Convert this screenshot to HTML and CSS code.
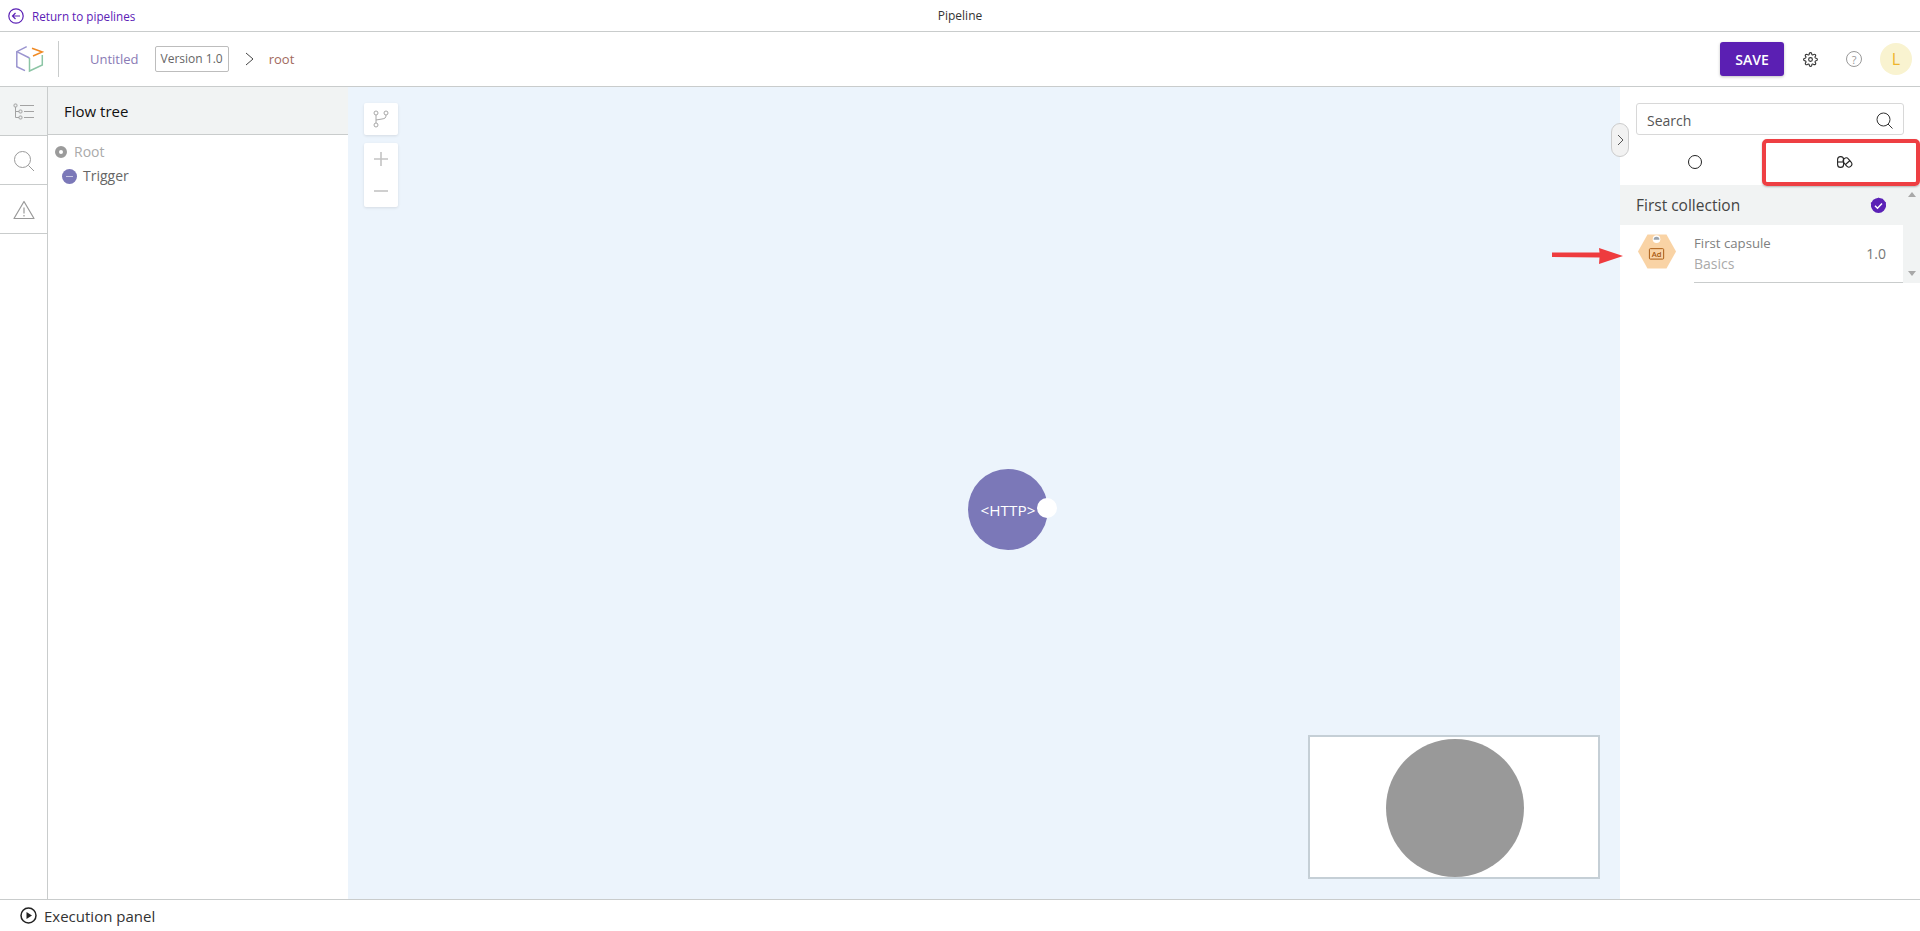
FILE: index.html
```html
<!DOCTYPE html>
<html lang="en">
  <head>
    <meta charset="UTF-8" />
    <title>Pipeline</title>
    <link rel="stylesheet" href="styles.css">
  </head>
  <body>
    <div class="topbar">
      <a class="back">
        <svg width="16" height="16" viewBox="0 0 16 16" fill="none" stroke="#5b21b6" stroke-width="1.2"><circle cx="8" cy="8" r="7.2"/><path d="M12 8H4.500M7.500 5 4.500 8l3 3"/></svg>
        Return to pipelines
      </a>
      <span class="page-title">Pipeline</span>
    </div>

    <header class="header">
      <div class="logo">
        <svg width="28" height="27" viewBox="0 0 28 27" fill="none" stroke-width="1.500">
          <path d="M10.700.7.800 5.700v15l8.200 4" stroke="#9a94cf"/>
          <path d="M.8 5.700 13.500 12" stroke="#9a94cf"/>
          <path d="M13.500 12v13l12.800-6V9" stroke="#8cc5a5"/>
          <path d="M16 2.300 26.300 6 17 10" stroke="#f08a24"/>
        </svg>
      </div>
      <span class="doc-name">Untitled</span>
      <span class="version">Version 1.0</span>
      <svg class="crumb" width="9" height="14" viewBox="0 0 9 14" fill="none" stroke="#444" stroke-width="1"><path d="M1 1l7 6-7 6"/></svg>
      <span class="root-name">root</span>
      <div class="header-right">
        <button class="save">SAVE</button>
        <svg class="gear" width="15" height="15" viewBox="0 0 24 24" fill="none" stroke="#333" stroke-width="1.800"><circle cx="12" cy="12" r="3"/><path d="M19.400 15a1.650 1.650 0 0 0 .33 1.820l.06.06a2 2 0 0 1 0 2.830 2 2 0 0 1-2.830 0l-.06-.06a1.650 1.650 0 0 0-1.820-.33 1.650 1.650 0 0 0-1 1.510V21a2 2 0 0 1-2 2 2 2 0 0 1-2-2v-.09A1.650 1.650 0 0 0 9 19.400a1.650 1.650 0 0 0-1.820.33l-.06.06a2 2 0 0 1-2.830 0 2 2 0 0 1 0-2.830l.06-.06a1.650 1.650 0 0 0 .33-1.820 1.650 1.650 0 0 0-1.510-1H3a2 2 0 0 1-2-2 2 2 0 0 1 2-2h.09A1.650 1.650 0 0 0 4.600 9a1.650 1.650 0 0 0-.33-1.820l-.06-.06a2 2 0 0 1 0-2.830 2 2 0 0 1 2.830 0l.06.06a1.650 1.650 0 0 0 1.820.33H9a1.650 1.650 0 0 0 1-1.510V3a2 2 0 0 1 2-2 2 2 0 0 1 2 2v.09a1.650 1.650 0 0 0 1 1.510 1.650 1.650 0 0 0 1.820-.33l.06-.06a2 2 0 0 1 2.830 0 2 2 0 0 1 0 2.830l-.06.06a1.650 1.650 0 0 0-.33 1.820V9a1.650 1.650 0 0 0 1.510 1H21a2 2 0 0 1 2 2 2 2 0 0 1-2 2h-.09a1.650 1.650 0 0 0-1.510 1z"/></svg>
        <span class="help">?</span>
        <span class="avatar">L</span>
      </div>
    </header>

    <main class="workspace">
      <nav class="rail">
        <div class="rail-item active">
          <svg width="22" height="18" viewBox="0 0 22 18" fill="none" stroke="#a3a3a3" stroke-width="1"><rect x="1" y="1" width="3" height="3" rx="1"/><rect x="6" y="7" width="3" height="3" rx="1"/><rect x="6" y="13" width="3" height="3" rx="1"/><path d="M2.500 4v10.500H6M2.500 8.500H6M7 2.500h14M11 8.500h10M11 14.500h10"/></svg>
        </div>
        <div class="rail-item">
          <svg width="22" height="22" viewBox="0 0 22 22" fill="none" stroke="#9a9a9a" stroke-width="1"><circle cx="9.500" cy="9.500" r="8"/><path d="m15.500 15.500 5.500 5.500"/></svg>
        </div>
        <div class="rail-item">
          <svg width="22" height="20" viewBox="0 0 22 20" fill="none" stroke="#999" stroke-width="1.200" stroke-linejoin="round"><path d="M11 1.500 1 18.500h20zM11 7.500v6M11 15v1.500"/></svg>
        </div>
      </nav>

      <section class="tree">
        <h2 class="tree-title">Flow tree</h2>
        <div class="tree-root"><span class="root-dot"></span>Root</div>
        <div class="tree-node"><span class="node-dot"></span>Trigger</div>
      </section>

      <section class="canvas">
        <div class="tools">
          <div class="tool-box branch">
            <svg width="16" height="18" viewBox="0 0 16 18" fill="none" stroke="#a8a8a8" stroke-width="1"><circle cx="3" cy="3" r="2"/><circle cx="13" cy="3" r="2"/><circle cx="3" cy="15" r="2"/><path d="M3 5v8M13 5c0 3-1 3.500-4 4L3 10"/></svg>
          </div>
          <div class="tool-box zoom">
            <svg width="14" height="14" viewBox="0 0 14 14" stroke="#c4c4c4" stroke-width="1.600"><path d="M7 0v14M0 7h14"/></svg>
            <svg width="14" height="14" viewBox="0 0 14 14" stroke="#c4c4c4" stroke-width="1.600"><path d="M0 7h14"/></svg>
          </div>
        </div>

        <div class="node">&lt;HTTP&gt;<span class="port"></span></div>

        <div class="minimap"><span class="minimap-dot"></span></div>

        <button class="collapse">
          <svg width="7" height="12" viewBox="0 0 7 12" fill="none" stroke="#555" stroke-width="1"><path d="m1 1 5 5-5 5"/></svg>
        </button>
      </section>

      <aside class="panel">
        <div class="search">
          <span>Search</span>
          <svg width="17" height="17" viewBox="0 0 17 17" fill="none" stroke="#333" stroke-width="1"><circle cx="7.500" cy="7.500" r="6.500"/><path d="m12 12 4.500 4.500"/></svg>
        </div>
        <div class="tabs">
          <div class="tab"><span class="tab-circle"></span></div>
          <div class="tab">
            <svg width="16" height="12" viewBox="0 0 16 12" fill="none" stroke="#222" stroke-width="1.100"><rect x=".6" y=".6" width="6" height="10.800" rx="3"/><path d="M.6 6h6"/><rect x="7.500" y="1.500" width="6" height="10" rx="3" transform="rotate(-40 10.500 6.500)"/><path d="m8.500 8.500 4.500-4"/></svg>
          </div>
        </div>
        <div class="collection">
          <div class="collection-head">
            <span>First collection</span>
            <svg width="17" height="17" viewBox="0 0 17 17"><circle cx="8.500" cy="8.500" r="7.500" fill="#5b21b6"/><path d="M8.500.5l2 1.300 2.400-.1 1 2.200 2 1.300-.5 2.300.5 2.300-2 1.300-1 2.200-2.400-.1-2 1.300-2-1.300-2.400.1-1-2.200-2-1.300.5-2.300L.6 5.900l2-1.300 1-2.200 2.400.1z" fill="#5b21b6"/><path d="m5 8.700 2.500 2.500L12 6.500" fill="none" stroke="#fff" stroke-width="1.500"/></svg>
          </div>
          <div class="capsule">
            <div class="capsule-icon">
              <svg width="38" height="35" viewBox="0 0 40 36">
                <path d="M10 0h20l10 18-10 18H10L0 18z" fill="#f9d3a5"/>
                <circle cx="19.500" cy="5" r="4" fill="#fff"/>
                <path d="M16.500 5.500a3 3 0 0 1 6 0z" fill="#9aa3ad"/>
                <rect x="12" y="15" width="15" height="11" rx="1" fill="none" stroke="#a8560e" stroke-width="1"/>
                <text x="19.500" y="24" class="ad-text">Ad</text>
              </svg>
            </div>
            <div class="capsule-body">
              <div class="capsule-text">
                <div class="capsule-name">First capsule</div>
                <div class="capsule-group">Basics</div>
              </div>
              <span class="capsule-version">1.0</span>
            </div>
          </div>
          <div class="scrollbar">
            <span class="arrow-up"></span>
            <span class="arrow-down"></span>
          </div>
        </div>
      </aside>

      <!-- annotations drawn over the screenshot -->
      <div class="mark-box"></div>
      <svg class="mark-arrow" width="72" height="18" viewBox="0 0 72 18"><path d="M0 5.500h47.500L47 1l24 8-24 8 .5-6.500L0 10z" fill="#ee3b3e"/></svg>
    </main>

    <footer class="footer">
      <svg width="17" height="17" viewBox="0 0 17 17" fill="none" stroke="#222" stroke-width="1.500"><circle cx="8.500" cy="8.500" r="7.500"/><path d="M6.500 5v7l5.500-3.500z" fill="#222" stroke="none"/></svg>
      Execution panel
    </footer>
  </body>
</html>
```

FILE: styles.css
```css
* {
  box-sizing: border-box;
}
html,
body {
  height: 100%;
}
body {
  margin: 0;
  display: flex;
  flex-direction: column;
  height: 931px;
  overflow: hidden;
  font-family: "Open Sans", sans-serif;
  color: #333;
  background: #fff;
}

.topbar {
  position: relative;
  display: flex;
  align-items: center;
  height: 32px;
  flex-shrink: 0;
  padding-left: 8px;
  border-bottom: 1px solid #c9cccc;
}
.back {
  display: flex;
  align-items: center;
  gap: 8px;
  font-size: 11.700px;
  color: #5b21b6;
}
.page-title {
  position: absolute;
  left: 0;
  right: 0;
  text-align: center;
  font-size: 12px;
  color: #333;
}

.header {
  display: flex;
  align-items: center;
  height: 55px;
  flex-shrink: 0;
  border-bottom: 1px solid #c9cccc;
}
.logo {
  display: flex;
  align-items: center;
  justify-content: center;
  width: 59px;
  height: 36px;
  padding-left: 2px;
  border-right: 1px solid #c9cccc;
}
.doc-name {
  margin-left: 31px;
  font-size: 13px;
  color: #8a7bb5;
}
.version {
  margin-left: 16px;
  padding: 0 5px;
  height: 26px;
  line-height: 24px;
  font-size: 12px;
  color: #666;
  border: 1px solid #bdbdbd;
  border-radius: 2px;
}
.crumb {
  margin-left: 16px;
}
.root-name {
  margin-left: 15px;
  font-size: 13px;
  color: #a1695c;
}
.header-right {
  display: flex;
  align-items: center;
  margin-left: auto;
  padding-right: 8px;
}
.save {
  width: 64px;
  height: 34px;
  margin-right: 19px;
  border: 0;
  border-radius: 3px;
  background: #5b1fb3;
  color: #fff;
  font-family: inherit;
  font-size: 14px;
  font-weight: 600;
  box-shadow: 0 1px 3px rgba(0, 0, 0, 0.25);
}
.help {
  display: flex;
  align-items: center;
  justify-content: center;
  width: 16px;
  height: 16px;
  margin-left: 28px;
  border: 1px solid #999;
  border-radius: 50%;
  font-size: 11px;
  color: #999;
}
.avatar {
  display: flex;
  align-items: center;
  justify-content: center;
  width: 32px;
  height: 32px;
  margin-left: 18px;
  border-radius: 50%;
  background: #f9f3d0;
  color: #eeb32b;
  font-size: 16px;
}

.workspace {
  position: relative;
  display: flex;
  flex: 1;
  min-height: 0;
}
.rail {
  width: 48px;
  flex-shrink: 0;
  border-right: 1px solid #c9cccc;
}
.rail-item {
  display: flex;
  align-items: center;
  justify-content: center;
  height: 49px;
  padding-top: 2px;
  border-bottom: 1px solid #c9cccc;
}
.rail-item.active {
  background: #f2f4f4;
}

.tree {
  width: 300px;
  flex-shrink: 0;
}
.tree-title {
  margin: 0;
  height: 48px;
  padding-left: 16px;
  line-height: 48px;
  font-size: 15px;
  font-weight: 400;
  color: #111;
  background: #f1f3f3;
  border-bottom: 1px solid #c9cccc;
}
.tree-root,
.tree-node {
  display: flex;
  align-items: center;
  font-size: 14px;
  line-height: 24px;
}
.tree-root {
  margin-top: 5px;
  padding-left: 7px;
  color: #aaa;
}
.tree-node {
  padding-left: 14px;
  color: #666;
}
.root-dot {
  width: 12px;
  height: 12px;
  margin-right: 7px;
  border: 4px solid #9b9b9b;
  border-radius: 50%;
  background: #fff;
}
.node-dot {
  display: flex;
  align-items: center;
  justify-content: center;
  width: 15px;
  height: 15px;
  margin-right: 6px;
  border-radius: 50%;
  background: #7b78b8;
}
.node-dot::before {
  content: "";
  width: 7px;
  height: 1px;
  background: #c9c8e4;
}

.canvas {
  position: relative;
  flex: 1;
  background: #ecf4fc;
}
.tools {
  display: flex;
  flex-direction: column;
  gap: 8px;
  width: 34px;
  margin: 16px 0 0 16px;
}
.tool-box {
  display: flex;
  flex-direction: column;
  align-items: center;
  background: #fff;
  border-radius: 2px;
  box-shadow: 0 1px 3px rgba(0, 0, 0, 0.1);
}
.branch {
  justify-content: center;
  height: 32px;
}
.zoom {
  gap: 18px;
  height: 64px;
  padding-top: 9px;
}
.node {
  position: absolute;
  left: 620px;
  top: 382px;
  display: flex;
  align-items: center;
  justify-content: center;
  width: 80px;
  height: 81px;
  border-radius: 50%;
  background: #7b78b8;
  color: #fff;
  font-size: 15.300px;
}
.port {
  position: absolute;
  left: 69px;
  top: 29px;
  width: 20px;
  height: 20px;
  border-radius: 50%;
  background: #fff;
}
.minimap {
  position: absolute;
  left: 960px;
  top: 648px;
  display: flex;
  align-items: center;
  justify-content: center;
  width: 292px;
  height: 144px;
  padding: 1px 0 0 2px;
  border: 2px solid #c5cfd6;
  background: #fff;
}
.minimap-dot {
  width: 138px;
  height: 138px;
  border-radius: 50%;
  background: #999;
}
.collapse {
  position: absolute;
  right: -9px;
  top: 36px;
  display: flex;
  align-items: center;
  justify-content: center;
  width: 18px;
  height: 34px;
  padding: 0;
  border: 1px solid #ccc;
  border-radius: 9px;
  background: #f2f2f2;
}

.panel {
  width: 300px;
  flex-shrink: 0;
}
.search {
  display: flex;
  align-items: center;
  justify-content: space-between;
  height: 32px;
  margin: 16px 16px 0;
  padding: 2px 10px 0;
  border: 1px solid #d8d8d8;
  border-radius: 3px;
  font-size: 14px;
  color: #555;
}
.tabs {
  display: flex;
  height: 50px;
  padding-top: 3px;
}
.tab {
  display: flex;
  align-items: center;
  justify-content: center;
  width: 150px;
}
.tab-circle {
  width: 14px;
  height: 14px;
  border: 1.300px solid #222;
  border-radius: 50%;
}
.collection {
  position: relative;
}
.collection-head {
  display: flex;
  align-items: center;
  justify-content: space-between;
  height: 40px;
  padding: 0 33px 0 16px;
  background: #f1f3f3;
  font-size: 15.500px;
  color: #444;
}
.capsule {
  display: flex;
  width: 283px;
  height: 58px;
}
.capsule-icon {
  display: flex;
  align-items: center;
  width: 74px;
  padding: 0 0 5px 18px;
  flex-shrink: 0;
}
.ad-text {
  font-family: "Open Sans", sans-serif;
  font-size: 8px;
  font-weight: 600;
  text-anchor: middle;
  fill: #a8560e;
}
.capsule-body {
  display: flex;
  align-items: center;
  justify-content: space-between;
  flex: 1;
  padding-right: 17px;
  border-bottom: 1px solid #c9cccc;
}
.capsule-name {
  font-size: 13.200px;
  line-height: 21px;
  color: #808080;
}
.capsule-group {
  font-size: 14px;
  line-height: 20px;
  color: #aaa;
}
.capsule-version {
  font-size: 14px;
  color: #777;
}
.scrollbar {
  position: absolute;
  right: 0;
  top: 0;
  display: flex;
  flex-direction: column;
  align-items: center;
  justify-content: space-between;
  width: 17px;
  height: 98px;
  padding: 7px 0;
  background: #f1f3f3;
}
.arrow-up {
  border: 4px solid transparent;
  border-top: 0;
  border-bottom: 5px solid #a8a8a8;
}
.arrow-down {
  border: 4px solid transparent;
  border-bottom: 0;
  border-top: 5px solid #a8a8a8;
}

.mark-box {
  position: absolute;
  left: 1762px;
  top: 52px;
  width: 158px;
  height: 47px;
  border: 4px solid #ee3f43;
  border-radius: 5px;
  box-shadow: 0 1px 2px rgba(0, 0, 0, 0.25);
}
.mark-arrow {
  position: absolute;
  left: 1552px;
  top: 160px;
}

.footer {
  display: flex;
  align-items: center;
  gap: 7px;
  height: 32px;
  flex-shrink: 0;
  padding-left: 20px;
  border-top: 1px solid #c9cccc;
  font-size: 15px;
  color: #333;
}
```
